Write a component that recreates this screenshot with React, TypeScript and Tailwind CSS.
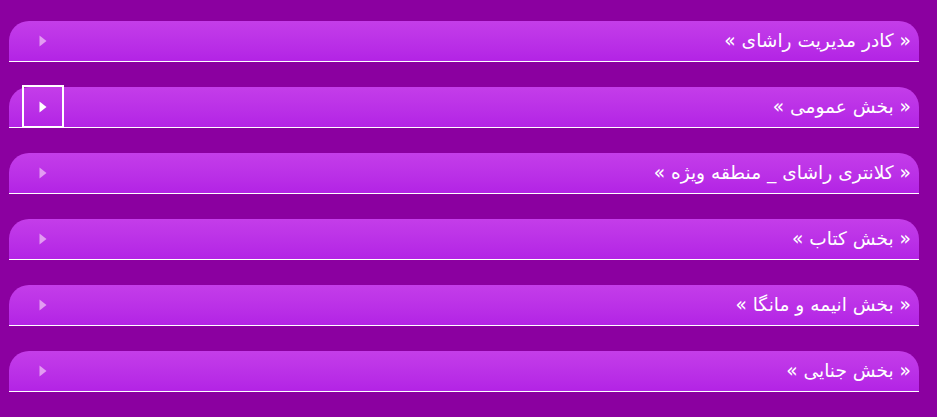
import React from "react";

const sections = [
  "« کادر مدیریت راشای »",
  "« بخش عمومی »",
  "« کلانتری راشای _ منطقه ویژه »",
  "« بخش کتاب »",
  "« بخش انیمه و مانگا »",
  "« بخش جنایی »",
];

const Row: React.FC<{ title: string; focused?: boolean }> = ({ title, focused }) => (
  <div
    dir="rtl"
    className="relative flex h-[41px] items-center justify-between rounded-tl-[20px] rounded-tr-[20px] border-b border-white bg-gradient-to-b from-[#c43de9] to-[#b323e5] pr-[8px]"
  >
    <span className="text-[18.6px] leading-none text-white [font-family:'DejaVu_Sans',sans-serif]">
      {title}
    </span>
    <button
      className={
        "ml-[13px] mt-[-1px] flex h-[43px] w-[42px] items-center justify-center " +
        (focused ? "border-2 border-white" : "border-2 border-transparent")
      }
    >
      <svg width="8" height="12" viewBox="0 0 8 12" className="mr-[1px]">
        <path d="M0.5 0.5 L7.5 6 L0.5 11.5 Z" fill={focused ? "#ffffff" : "#e29cf2"} />
      </svg>
    </button>
  </div>
);

export default function App() {
  return (
    <div className="min-h-[417px] w-full bg-[#8b00a0] pt-[21px] pl-[9px] pr-[18px]">
      <div className="flex flex-col gap-[25px]">
        {sections.map((s, i) => (
          <Row key={i} title={s} focused={i === 1} />
        ))}
      </div>
    </div>
  );
}
